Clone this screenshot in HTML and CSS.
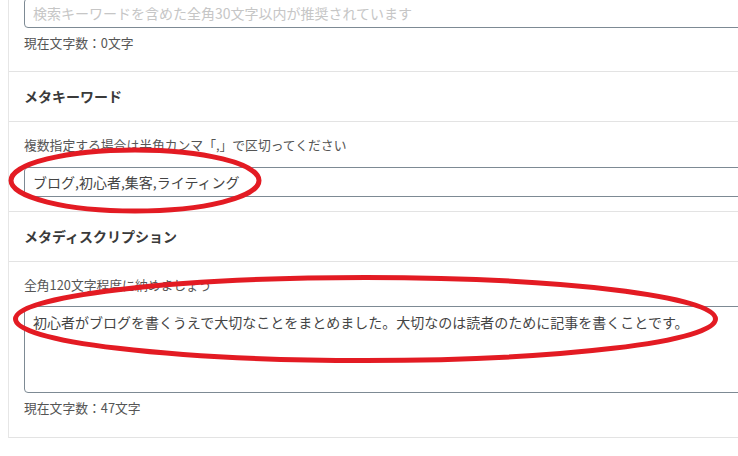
FILE: index.html
```html
<!DOCTYPE html>
<html lang="ja">
<head>
<meta charset="utf-8">
<title>メタ設定</title>
<link rel="stylesheet" href="styles.css">
</head>
<body>
<div class="card">
  <div class="section section-first">
    <input class="field" type="text" placeholder="検索キーワードを含めた全角30文字以内が推奨されています">
    <p class="count">現在文字数：0文字</p>
  </div>
  <div class="heading">メタキーワード</div>
  <div class="section">
    <p class="hint">複数指定する場合は半角カンマ「,」で区切ってください</p>
    <input class="field" type="text" value="ブログ,初心者,集客,ライティング">
  </div>
  <div class="heading">メタディスクリプション</div>
  <div class="section section-last">
    <p class="hint">全角120文字程度に納めましょう</p>
    <textarea class="field area">初心者がブログを書くうえで大切なことをまとめました。大切なのは読者のために記事を書くことです。</textarea>
    <p class="count">現在文字数：47文字</p>
  </div>
</div>
<svg class="marks" width="738" height="456" viewBox="0 0 738 456">
  <ellipse cx="135" cy="180.5" rx="124" ry="30.5" fill="none" stroke="#e31b23" stroke-width="5"/>
  <ellipse cx="365.5" cy="319" rx="350" ry="41.5" fill="none" stroke="#e31b23" stroke-width="5"/>
</svg>
</body>
</html>
```
FILE: styles.css
```css
html, body {
  margin: 0;
  padding: 0;
  overflow: hidden;
  background: #ffffff;
}
body {
  position: relative;
  width: 738px;
  height: 456px;
  font-family: "Noto Sans CJK JP", "Noto Sans", sans-serif;
  color: #333333;
}
.card {
  margin: -2px 0 0 8px;
  width: 800px;
  border-left: 1px solid #e6e6e6;
}
.section {
  padding: 14px 0 14px 15px;
  border-bottom: 1px solid #e3e3e3;
}
.section-first {
  padding-top: 0;
  padding-bottom: 19px;
}
.section-last {
  padding-bottom: 20px;
}
.heading {
  padding: 14px 0 15px 15px;
  font-size: 14px;
  line-height: 20px;
  font-weight: bold;
  color: #3a3a3a;
  border-bottom: 1px solid #e3e3e3;
}
.hint, .count {
  margin: 0;
  font-size: 12.8px;
  line-height: 18px;
  color: #555555;
}
.hint {
  margin-bottom: 13px;
}
.section-last .hint {
  margin-bottom: 12px;
}
.count {
  margin-top: 6px;
}
.field {
  display: block;
  box-sizing: border-box;
  width: 760px;
  height: 30px;
  margin: 0;
  padding: 5px 8px;
  border: 1px solid #7d8a94;
  border-radius: 4px;
  font-family: "Noto Sans CJK JP", "Noto Sans", sans-serif;
  font-size: 14px;
  line-height: 18px;
  color: #444444;
  background: #ffffff;
  outline: none;
}
.field::placeholder {
  color: #c6c6c6;
}
.area {
  height: 87px;
  padding: 6px 8px;
  resize: none;
  overflow: hidden;
}
.marks {
  position: absolute;
  left: 0;
  top: 0;
  pointer-events: none;
}
```
